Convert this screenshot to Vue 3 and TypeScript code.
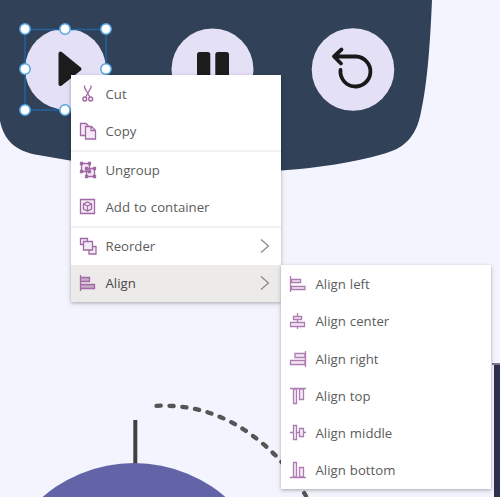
<script setup lang="ts">
interface MenuItem {
  label: string
  icon: string
  divider?: boolean
  submenu?: boolean
  active?: boolean
}

const menu: MenuItem[] = [
  { label: 'Cut', icon: 'M5.500 .5V2.500L10.800 12M12 .5V2.500L6.700 12M5.800 12a2 2 0 1 0 0 4a2 2 0 1 0 0-4M11.700 12a2 2 0 1 0 0 4a2 2 0 1 0 0-4' },
  { label: 'Copy', icon: 'M6.500 13.500h-5V1.500h5.500l2.500 2.500M6.500 4.500h6l4 4v8.500h-10zM12 4.500v4h4.500', divider: true },
  { label: 'Ungroup', icon: 'M2.500 2.500h8v8h-8zM7.500 7.500h8v8h-8zM1.500 1.500h2v2h-2zM9.500 1.500h2v2h-2zM1.500 9.500h2v2h-2zM9.500 9.500h2v2h-2zM6.500 6.500h2v2h-2zM14.500 6.500h2v2h-2zM6.500 14.500h2v2h-2zM14.500 14.500h2v2h-2z' },
  { label: 'Add to container', icon: 'M1.500 1.500h14v14h-14zM8.500 4l4 2v5l-4 2-4-2V6zM4.500 6l4 2 4-2M8.500 8v5', divider: true },
  { label: 'Reorder', icon: 'M4.500 7.500h-3v-6h7v3M4.500 4.500h9v8.500h-9zM13.500 9.500h3.500v7.500h-7v-4', submenu: true },
  { label: 'Align', icon: 'M1.500 1v16M1.500 3.500h9v4h-9zM1.500 10.500h14v4h-14z', submenu: true, active: true },
]

const alignMenu: MenuItem[] = [
  { label: 'Align left', icon: 'M1.500 1v16M2.500 4.500h9v3h-9zM2.500 11.500h13.500v3H2.500z' },
  { label: 'Align center', icon: 'M8.500 1v3M8.500 7.500v3M8.500 14v3M4.500 4.500h8v3h-8zM1.500 10.500h14v4h-14z' },
  { label: 'Align right', icon: 'M16.500 1v16M6 3.500h10v4H6zM1.500 10.500h14.500v4H1.500z' },
  { label: 'Align top', icon: 'M1 1.500h16M4.500 2h3v14.500h-3zM10.500 2h4v10.500h-4z' },
  { label: 'Align middle', icon: 'M1 8.500h3M7.500 8.500h3M14.500 8.500H17M4.500 1.500h3v14h-3zM10.500 4.500h4v8h-4z' },
  { label: 'Align bottom', icon: 'M1 16.500h16M4.500 1.500h3v14.500h-3zM10.500 6.500h4v9.500h-4z' },
]

const handles = [
  [25, 29], [65, 29], [106, 29],
  [25, 69], [106, 69],
  [25, 110], [65, 110], [106, 110],
]
</script>

<template>
  <main class="canvas">
    <svg class="art" viewBox="0 0 500 497" width="500" height="497">
      <path class="panel" d="M0 0H432C430 48 427 85 421 112C416 139 402 149 383 154C352 163 316 168 281 170.500C210 174 130 170 70 160.500L38 155C15 151 4 140 0 121Z" />
      <circle class="button" cx="65.500" cy="69" r="40.500" />
      <circle class="button" cx="212.500" cy="69.500" r="41" />
      <circle class="button" cx="353" cy="69.500" r="41.300" />
      <path class="glyph" d="M60.500 53.500L79.500 69L60.500 84Z" />
      <rect class="pause" x="197" y="52" width="13.300" height="36" rx="2.500" />
      <rect class="pause" x="215.300" y="52" width="13.700" height="36" rx="2.500" />
      <path class="undo" d="M341.500 49.500L334 56.500L341 63.500M335 56.500H356A15 15 0 1 1 340.500 70" />
      <rect class="selection" x="25" y="29.500" width="81" height="80.500" />
      <circle v-for="([x, y], i) in handles" :key="i" class="handle" :cx="x" :cy="y" r="5.200" />
      <path class="dashes" d="M156.500 405.800C203 404 242 421 278 458Q292 473 306 496" />
      <path class="stem" d="M135.300 420V468" />
      <circle class="disc" cx="134" cy="603" r="140" />
      <path class="side" d="M494 364H500V497H494Z" />
      <path class="side-edge" d="M492 364H500" />
    </svg>

    <ul class="menu primary">
      <li v-for="item in menu" :key="item.label" class="item" :class="{ divided: item.divider, active: item.active }">
        <svg class="icon" viewBox="0 0 18 18"><path :d="item.icon" /></svg>
        <span class="label">{{ item.label }}</span>
        <svg v-if="item.submenu" class="chevron" viewBox="0 0 10 16"><path d="M1 1.500L8.500 8L1 14.500" /></svg>
      </li>
    </ul>

    <ul class="menu secondary">
      <li v-for="item in alignMenu" :key="item.label" class="item">
        <svg class="icon" viewBox="0 0 18 18"><path :d="item.icon" /></svg>
        <span class="label">{{ item.label }}</span>
      </li>
    </ul>
  </main>
</template>

<style>
body {
  margin: 0;
  overflow: hidden;
}
</style>

<style scoped>
.canvas {
  position: relative;
  width: 500px;
  height: 497px;
  overflow: hidden;
  background: #f4f4ff;
  font-family: "Open Sans", "Noto Sans", sans-serif;
}
.art {
  display: block;
}
.panel {
  fill: #304158;
}
.button {
  fill: #e4e1f7;
}
.glyph {
  fill: #1d1d1d;
  stroke: #1d1d1d;
  stroke-width: 4;
  stroke-linejoin: round;
}
.pause {
  fill: #1d1d1d;
}
.undo {
  fill: none;
  stroke: #191919;
  stroke-width: 3.800;
  stroke-linecap: round;
  stroke-linejoin: round;
}
.selection {
  fill: none;
  stroke: #20639f;
  stroke-width: 1.500;
}
.handle {
  fill: #fff;
  stroke: #55a5e2;
  stroke-width: 1.500;
}
.dashes {
  fill: none;
  stroke: #555;
  stroke-width: 4.300;
  stroke-linecap: round;
  stroke-dasharray: 4.200 8.700;
}
.stem {
  stroke: #404040;
  stroke-width: 4;
}
.disc {
  fill: #6264a7;
}
.side {
  fill: #2e304d;
}
.side-edge {
  stroke: #777989;
  stroke-width: 2;
}
.menu {
  position: absolute;
  box-sizing: border-box;
  width: 210px;
  margin: 0;
  padding: 1px 0 0;
  list-style: none;
  background: #fff;
  box-shadow: 0 1px 3px rgba(0, 0, 0, 0.24), 0 2px 7px rgba(0, 0, 0, 0.09);
}
.primary {
  left: 71px;
  top: 75px;
}
.secondary {
  left: 281px;
  top: 265px;
  padding-top: 0.500px;
}
.item {
  display: flex;
  align-items: center;
  box-sizing: border-box;
  height: 37px;
  padding: 0 11px 1px 8px;
}
.secondary .item {
  height: 37.250px;
  padding-bottom: 0;
}
.divided {
  height: 39px;
  border-bottom: 2px solid #f1f1f1;
}
.active {
  background: #edebe9;
}
.icon {
  flex: none;
  width: 18px;
  height: 18px;
  margin-right: 8.500px;
  fill: rgba(154, 91, 157, 0.12);
  stroke: #a169a5;
  stroke-width: 1.300;
}
.secondary .icon {
  stroke: #b07bb3;
}
.active .icon {
  fill: rgba(154, 91, 157, 0.45);
}
.label {
  flex: 1;
  color: #5c5c5c;
  font-size: 13.200px;
  line-height: 18px;
  white-space: nowrap;
  word-spacing: 0.700px;
}
.active .label {
  color: #484848;
}
.chevron {
  width: 10px;
  height: 16px;
  fill: none;
  stroke: #888;
  stroke-width: 1.200;
}
</style>
